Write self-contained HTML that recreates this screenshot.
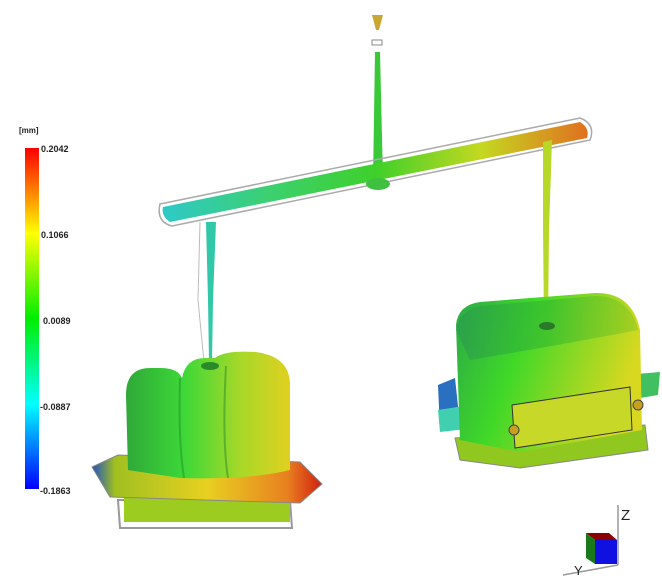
<!DOCTYPE html>
<html><head><style>
html,body{margin:0;padding:0;background:#fff;width:662px;height:586px;overflow:hidden}
svg{display:block}
text{font-family:"Liberation Sans",sans-serif;font-weight:bold;font-size:9px;fill:#222}
</style></head><body>
<svg width="662" height="586" viewBox="0 0 662 586">
<defs>
<linearGradient id="leg" x1="0" y1="0" x2="0" y2="1">
<stop offset="0" stop-color="#f00"/><stop offset="0.25" stop-color="#ff0"/><stop offset="0.5" stop-color="#0e0"/><stop offset="0.75" stop-color="#0ff"/><stop offset="1" stop-color="#00f"/></linearGradient>
<linearGradient id="run" x1="0" y1="0" x2="1" y2="0">
<stop offset="0" stop-color="#2ec9c8"/><stop offset="0.25" stop-color="#3cd070"/><stop offset="0.5" stop-color="#3ed02a"/><stop offset="0.75" stop-color="#c4d820"/><stop offset="1" stop-color="#e07020"/></linearGradient>
<linearGradient id="lbody" x1="0" y1="0" x2="1" y2="0">
<stop offset="0" stop-color="#2fa838"/><stop offset="0.35" stop-color="#3cd838"/><stop offset="0.7" stop-color="#a8d828"/><stop offset="1" stop-color="#e0d020"/></linearGradient>
<linearGradient id="lfl" x1="0" y1="0" x2="1" y2="0">
<stop offset="0" stop-color="#2050c0"/><stop offset="0.1" stop-color="#a0c020"/><stop offset="0.5" stop-color="#e8d020"/><stop offset="0.85" stop-color="#e88020"/><stop offset="1" stop-color="#d02010"/></linearGradient>
<linearGradient id="rbody" x1="0" y1="0" x2="1" y2="0.3">
<stop offset="0" stop-color="#2aa848"/><stop offset="0.4" stop-color="#40d828"/><stop offset="1" stop-color="#d8d820"/></linearGradient>
<linearGradient id="rtop" x1="0" y1="0" x2="1" y2="0">
<stop offset="0" stop-color="#2a9850"/><stop offset="0.5" stop-color="#30b830"/><stop offset="1" stop-color="#90c820"/></linearGradient>
</defs>
<text x="19" y="133" style="font-size:8px">[mm]</text>
<rect x="25" y="148" width="14" height="341" fill="url(#leg)"/>
<text x="41" y="152">0.2042</text>
<text x="41" y="238">0.1066</text>
<text x="43" y="324">0.0089</text>
<text x="40" y="410">-0.0887</text>
<text x="40" y="494">-0.1863</text>
<path d="M372,15 L383,15 L379,30 L376,30 Z" fill="#c8a830"/>
<rect x="372" y="40" width="10" height="5" fill="none" stroke="#888" stroke-width="1"/>
<path d="M375,52 L380,52 L383,180 L373,180 Z" fill="#38c838"/>
<path d="M160,204 L580,118 Q596,124 590,140 L172,226 Q156,222 160,204 Z" fill="none" stroke="#aaa" stroke-width="1.5"/>
<path d="M163,207 L580,122 Q590,128 587,138 L170,222 Q161,216 163,207 Z" fill="url(#run)"/>
<ellipse cx="378" cy="184" rx="12" ry="6" fill="#40c040"/>
<path d="M206,222 L216,222 L213,300 L212,362 L209,362 L208,300 Z" fill="#30c8a8"/>
<path d="M200,222 L198,300 L204,362" fill="none" stroke="#bbb" stroke-width="1"/>
<path d="M543,142 L552,140 L549,230 L548,325 L544,325 L543,230 Z" fill="#b8d828"/>
<path d="M118,500 L290,500 L292,528 L120,528 Z" fill="none" stroke="#999" stroke-width="2"/>
<path d="M124,495 L290,495 L290,522 L124,522 Z" fill="#9ccc20"/>
<path d="M92,467 L118,455 L300,462 L322,484 L300,503 L110,497 Z" fill="url(#lfl)" stroke="#888" stroke-width="1"/>
<path d="M126,395 Q126,368 150,368 L160,368 Q178,368 182,378 Q186,358 205,358 L215,358 Q225,350 255,352 Q290,356 290,385 L290,470 Q250,480 180,478 L128,470 Z" fill="url(#lbody)"/>
<path d="M180,378 Q178,440 184,478 M226,366 Q222,440 228,478" stroke="#2a8a2a" stroke-width="2" fill="none" opacity="0.5"/>
<ellipse cx="210" cy="366" rx="9" ry="4" fill="#2a8a2a"/>
<path d="M438,385 L455,378 L460,425 L440,430 Z" fill="#2a70c0"/>
<path d="M438,410 L470,405 L475,428 L440,432 Z" fill="#40d0b0"/>
<path d="M625,375 L660,372 L658,395 L628,400 Z" fill="#40c060"/>
<path d="M455,438 L645,425 L648,450 L520,468 L460,460 Z" fill="#90c820" stroke="#888" stroke-width="1"/>
<path d="M456,325 Q458,305 480,302 L595,293 Q632,292 640,330 L642,430 L520,452 L460,440 Z" fill="url(#rbody)"/>
<path d="M456,330 Q460,310 480,306 L595,296 Q630,296 638,330 Q560,345 470,360 Z" fill="url(#rtop)" opacity="0.6"/>
<path d="M512,405 L630,387 L632,430 L515,448 Z" fill="#c8d828" stroke="#333" stroke-width="1"/>
<ellipse cx="547" cy="326" rx="8" ry="4" fill="#2a7a2a"/>
<circle cx="514" cy="430" r="5" fill="#c8a020" stroke="#444"/>
<circle cx="638" cy="405" r="5" fill="#c8a020" stroke="#444"/>
<line x1="618" y1="505" x2="618" y2="565" stroke="#999" stroke-width="1.5"/>
<line x1="563" y1="575" x2="618" y2="565" stroke="#999" stroke-width="1.5"/>
<path d="M586,533 L609,533 L617,540 L595,540 Z" fill="#8b0000"/>
<rect x="595" y="540" width="22" height="24" fill="#1010e0"/>
<path d="M586,533 L595,540 L595,564 L586,558 Z" fill="#1a7a1a"/>
<text x="621" y="520" style="font-size:15px;font-weight:normal">Z</text>
<text x="574" y="575" style="font-size:13px;font-weight:normal">Y</text>
</svg>
</body></html>
